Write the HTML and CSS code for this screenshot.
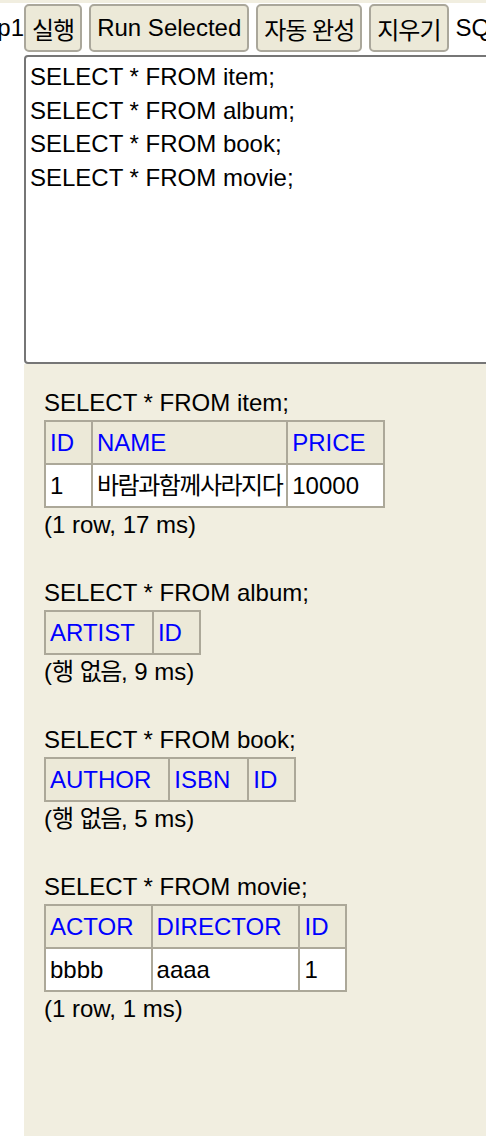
FILE: index.html
```html
<!DOCTYPE html>
<html lang="ko">
<head>
<meta charset="utf-8">
<title>H2 Console</title>
<link rel="stylesheet" href="styles.css">
</head>
<body>
<div class="topline"></div>
<div class="toolbar">
  <span class="cut"><span>p1</span></span>
  <button class="btn ko">실행</button>
  <button class="btn">Run Selected</button>
  <button class="btn ko">자동 완성</button>
  <button class="btn ko">지우기</button>
  <span class="label">SQL 문:</span>
</div>
<div class="editor">
  <textarea class="sql-input" spellcheck="false">SELECT * FROM item;
SELECT * FROM album;
SELECT * FROM book;
SELECT * FROM movie;</textarea>
</div>
<div class="results">
  <div class="stmt">SELECT * FROM item;</div>
  <table class="rs">
    <tr><th>ID</th><th>NAME</th><th>PRICE</th></tr>
    <tr><td>1</td><td><span class="ko">바람과함께사라지다</span></td><td>10000</td></tr>
  </table>
  <div class="status">(1 row, 17 ms)</div>

  <div class="stmt">SELECT * FROM album;</div>
  <table class="rs">
    <tr><th>ARTIST</th><th>ID</th></tr>
  </table>
  <div class="status">(<span class="ko">행 없음</span>, 9 ms)</div>

  <div class="stmt">SELECT * FROM book;</div>
  <table class="rs">
    <tr><th>AUTHOR</th><th>ISBN</th><th>ID</th></tr>
  </table>
  <div class="status">(<span class="ko">행 없음</span>, 5 ms)</div>

  <div class="stmt">SELECT * FROM movie;</div>
  <table class="rs">
    <tr><th>ACTOR</th><th>DIRECTOR</th><th>ID</th></tr>
    <tr><td>bbbb</td><td>aaaa</td><td>1</td></tr>
  </table>
  <div class="status">(1 row, 1 ms)</div>
</div>
</body>
</html>
```
FILE: styles.css
```css
* { box-sizing: border-box; }
html, body { margin: 0; height: 100%; }
body {
  font-family: "Liberation Sans", "Noto Sans CJK KR", Arial, sans-serif;
  font-size: 24px;
  color: #000;
  background: #fff;
  display: flex;
  flex-direction: column;
  overflow: hidden;
}
.ko { letter-spacing: -1.5px; word-spacing: 2px; }
.topline { flex: none; height: 3px; background: #f1eee0; }
.toolbar {
  flex: none;
  display: flex;
  align-items: flex-start;
  height: 52px;
  padding-top: 1px;
  white-space: nowrap;
  overflow: hidden;
}
.cut {
  flex: none;
  width: 24px;
  overflow: hidden;
  display: flex;
  justify-content: flex-end;
  line-height: 48px;
}
.btn {
  flex: none;
  height: 48px;
  margin: 0 7px 0 0;
  padding: 0 6px;
  border: 2px solid #aaa79b;
  border-radius: 5px;
  background: #ece9d8;
  font: inherit;
  color: #000;
}
.btn.ko { letter-spacing: -1px; word-spacing: 0; }
.label { flex: none; line-height: 48px; }
.editor {
  flex: none;
  padding-left: 24px;
  overflow: hidden;
}
.sql-input {
  display: block;
  width: 620px;
  height: 309px;
  margin: 0;
  padding: 3px 4px;
  border: 2px solid #767676;
  border-radius: 4px;
  font: inherit;
  line-height: 33.6px;
  color: #000;
  background: #fff;
  resize: none;
  outline: none;
}
.results {
  flex: 1;
  margin-left: 24px;
  background: #f1eee0;
  padding: 22px 0 0 20px;
  line-height: 34px;
}
.rs { border-collapse: collapse; line-height: 33px; }
.rs th, .rs td {
  border: 2px solid #aca899;
  padding: 4px;
  white-space: nowrap;
  text-align: left;
  font-weight: normal;
}
.rs th { background: #ece9d8; color: #0000ff; padding-right: 17px; }
.rs td { background: #fff; }
.status { margin-bottom: 34px; }
```
